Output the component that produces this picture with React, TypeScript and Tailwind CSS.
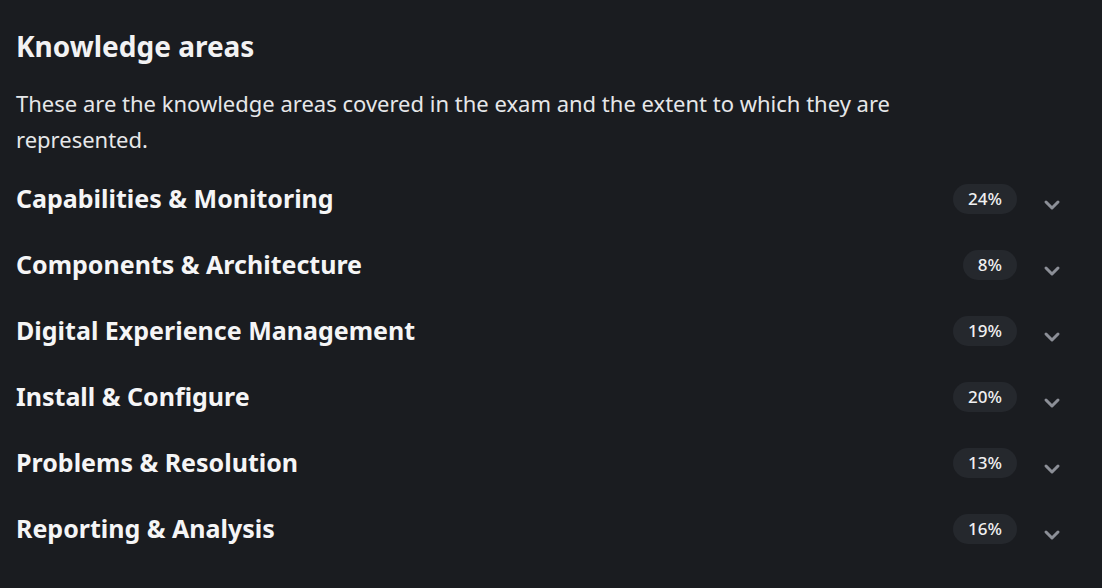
import { ChevronDown } from 'lucide-react';

const areas = [
  { label: 'Capabilities & Monitoring', pct: '24%' },
  { label: 'Components & Architecture', pct: '8%' },
  { label: 'Digital Experience Management', pct: '19%' },
  { label: 'Install & Configure', pct: '20%' },
  { label: 'Problems & Resolution', pct: '13%' },
  { label: 'Reporting & Analysis', pct: '16%' },
];

export default function App() {
  return (
    <div
      className="min-h-screen w-full bg-[#1a1c20] text-white"
      style={{ fontFamily: "'Noto Sans', 'Open Sans', sans-serif" }}
    >
      <div className="pl-4 pr-[38px] pt-[26px]">
        <h2 className="text-[28px] font-bold leading-[40px] text-[#f2f2f3]">Knowledge areas</h2>
        <p className="mt-[19px] max-w-[920px] text-[22px] leading-[36px] text-[#e6e7e9]">
          These are the knowledge areas covered in the exam and the extent to which they are represented.
        </p>

        {/* Areas list */}
        <div className="mt-[9px] flex flex-col">
          {areas.map((a) => (
            <div key={a.label} className="flex h-[66px] items-center justify-between">
              <span className="text-[25px] font-bold text-[#f5f5f6]">{a.label}</span>
              <div className="flex items-center gap-[23px]">
                <span className="rounded-full bg-[#25282d] px-[15px] py-[3px] text-[17px] font-medium leading-[24px] text-[#f0f0f1]">
                  {a.pct}
                </span>
                <ChevronDown className="mt-[12px] h-6 w-6 text-[#8c8f97]" strokeWidth={3} />
              </div>
            </div>
          ))}
        </div>
      </div>
    </div>
  );
}
